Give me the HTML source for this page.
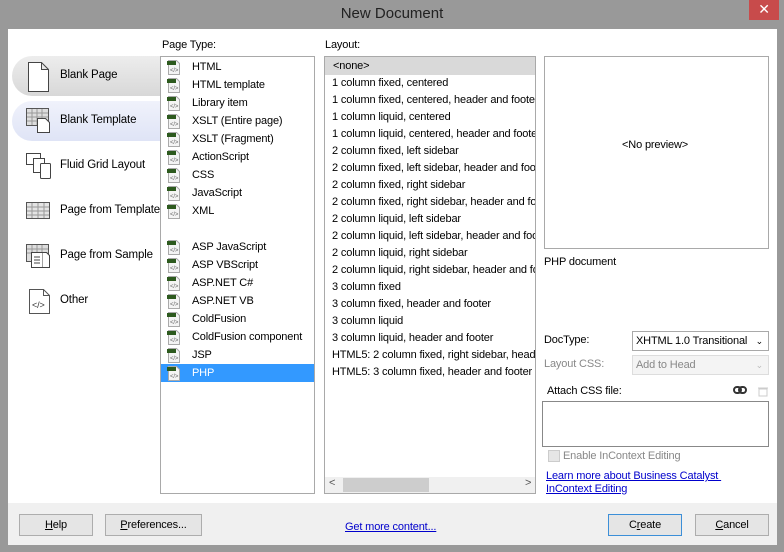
<!DOCTYPE html>
<html><head><meta charset="utf-8"><style>
*{margin:0;padding:0;box-sizing:border-box}
body{width:784px;height:552px;background:#999;font-family:"Liberation Sans",sans-serif;font-size:11px;letter-spacing:-0.15px;color:#000;position:relative;overflow:hidden}
.a{position:absolute;white-space:nowrap}
.title{left:0;top:5px;width:784px;text-align:center;font-size:15px;color:#222;letter-spacing:0}
.close{left:749px;top:0;width:30px;height:20px;background:#c84b4b;color:#fff;text-align:center;font-size:14px;line-height:19px}
.main{left:8px;top:29px;width:769px;height:475px;background:#fff}
.bot{left:8px;top:503px;width:769px;height:42px;background:#f0f0f0}
.box{border:1px solid #a9a9a9;background:#fff}
.pill{height:40px;border-radius:20px 0 0 20px}
.nav{left:60px;font-size:11.5px}
.row{position:absolute;left:0;height:18px;line-height:18px}
.ico{position:absolute;left:5px;top:1px;width:15px;height:16px}
.btn{border:1px solid #adadad;background:#e5e5e5;text-align:center;line-height:20px;height:22px}
.lnk{color:#0000cc;text-decoration:underline}
.sel{border:1px solid #a9a9a9;height:20px;line-height:18px;padding-left:3px}
</style></head><body>
<div class="a title">New Document</div>
<div class="a close">✕</div>
<div class="a main"></div>
<div class="a bot"></div>

<div class="a pill" style="left:12px;top:56px;width:150px;background:linear-gradient(#ededed,#d8d8d8)"></div>
<div class="a pill" style="left:12px;top:101px;width:150px;background:linear-gradient(#f0f2fb,#dfe4f6)"></div>

<svg class="a" style="left:24px;top:60px" width="30" height="34"><path d="M4.5 2.5h13l7 7v22h-20z M17.5 2.5v7h7" fill="#fff" stroke="#444"/></svg>
<svg class="a" style="left:25px;top:107px" width="28" height="27"><rect x="1.5" y="1.5" width="22" height="17" fill="#ddd" stroke="#555"/><path d="M2 6h21M2 10h21M2 14h21M7 2v16M12 2v16M17 2v16" stroke="#999"/><path d="M12.5 11.5h8l4 4v10h-12z" fill="#fff" stroke="#444"/></svg>
<svg class="a" style="left:25px;top:152px" width="28" height="28"><rect x="1.5" y="1.5" width="14" height="11" fill="#fff" stroke="#444"/><rect x="8.5" y="6.5" width="11" height="14" fill="#fff" stroke="#444"/><rect x="15.5" y="11.5" width="10" height="15" rx="1" fill="#fff" stroke="#444"/></svg>
<svg class="a" style="left:25px;top:200px" width="28" height="22"><rect x="1.5" y="2.5" width="23" height="16" fill="#e4e4e4" stroke="#555"/><path d="M2 7h22M2 11h22M2 15h22M7 3v15M13 3v15M19 3v15" stroke="#999"/></svg>
<svg class="a" style="left:25px;top:243px" width="28" height="28"><rect x="1.5" y="1.5" width="22" height="17" fill="#ddd" stroke="#555"/><path d="M2 6h21M2 10h21M7 2v16M12 2v16M17 2v16" stroke="#999"/><rect x="6.5" y="9.5" width="11" height="15" fill="#fff" stroke="#444"/><path d="M9 14h6M9 17h6M9 20h6" stroke="#444"/><path d="M17.5 9.5h4l3 3v12h-7" fill="#fff" stroke="#444"/></svg>
<svg class="a" style="left:28px;top:288px" width="24" height="28"><path d="M1.5 1.5h14l6 6v18h-20z M15.5 1.5v6h6" fill="#fff" stroke="#555"/><text x="4" y="20" font-size="9" font-family="Liberation Sans" fill="#333">&lt;/&gt;</text></svg>

<div class="a nav" style="top:69px">Blank Page</div>
<div class="a nav" style="top:114px">Blank Template</div>
<div class="a nav" style="top:159px">Fluid Grid Layout</div>
<div class="a nav" style="top:204px">Page from Template</div>
<div class="a nav" style="top:249px">Page from Sample</div>
<div class="a nav" style="top:294px">Other</div>

<div class="a" style="left:162px;top:39px">Page Type:</div>
<div class="a" style="left:325px;top:39px">Layout:</div>

<div class="a box" style="left:160px;top:56px;width:155px;height:438px">
<div id="pt"></div>
</div>
<div class="a box" style="left:324px;top:56px;width:212px;height:438px;overflow:hidden">
<div style="position:absolute;left:0;top:0;width:210px;height:18px;background:#d9d9d9"></div>
<div id="ly"></div>
<div style="position:absolute;left:0;top:420px;width:210px;height:16px;background:#f0f0f0"></div>
<div style="position:absolute;left:18px;top:421px;width:86px;height:14px;background:#cdcdcd"></div>
<div style="position:absolute;left:4px;top:420px;font-size:11px;color:#555">&lt;</div>
<div style="position:absolute;left:200px;top:420px;font-size:11px;color:#555">&gt;</div>
</div>

<div class="a box" style="left:544px;top:56px;width:225px;height:193px"></div>
<div class="a" style="left:622px;top:139px">&lt;No preview&gt;</div>
<div class="a" style="left:544px;top:256px">PHP document</div>

<div class="a" style="left:544px;top:334px">DocType:</div>
<div class="a sel" style="left:632px;top:331px;width:137px">XHTML 1.0 Transitional<span style="position:absolute;right:5px;font-size:9px">&#8964;</span></div>
<div class="a" style="left:544px;top:358px;color:#888">Layout CSS:</div>
<div class="a sel" style="left:632px;top:355px;width:137px;color:#888;border-color:#ddd;background:#f4f4f4">Add to Head<span style="position:absolute;right:5px;font-size:9px;color:#bbb">&#8964;</span></div>
<div class="a" style="left:547px;top:385px">Attach CSS file:</div>
<svg class="a" style="left:733px;top:385px" width="36" height="12"><rect x="1" y="2" width="7" height="6" rx="3" fill="none" stroke="#333" stroke-width="2"/><rect x="6" y="2" width="7" height="6" rx="3" fill="none" stroke="#333" stroke-width="2"/><path d="M25 3h10M26 4h8v7h-8z" fill="none" stroke="#ccc"/></svg>
<div class="a box" style="left:542px;top:401px;width:227px;height:46px;border-color:#888"></div>
<div class="a" style="left:548px;top:450px;width:12px;height:12px;border:1px solid #ccc;background:#e6e6e6"></div>
<div class="a" style="left:563px;top:450px;color:#888">Enable InContext Editing</div>
<div class="a lnk" style="left:546px;top:470px">Learn more about Business Catalyst&nbsp;</div>
<div class="a lnk" style="left:546px;top:483px">InContext Editing</div>

<div class="a btn" style="left:19px;top:514px;width:74px"><u>H</u>elp</div>
<div class="a btn" style="left:105px;top:514px;width:97px"><u>P</u>references...</div>
<div class="a lnk" style="left:345px;top:521px">Get more content...</div>
<div class="a btn" style="left:608px;top:514px;width:74px;border-color:#3c8fd8">C<u>r</u>eate</div>
<div class="a btn" style="left:695px;top:514px;width:74px"><u>C</u>ancel</div>

<script>
var pt=["HTML","HTML template","Library item","XSLT (Entire page)","XSLT (Fragment)","ActionScript","CSS","JavaScript","XML","","ASP JavaScript","ASP VBScript","ASP.NET C#","ASP.NET VB","ColdFusion","ColdFusion component","JSP","PHP"];
var ico='<svg class="ico" width="15" height="16"><path d="M2.5 1.5h8l3 3v11h-11z" fill="#f4f4f4" stroke="#aaa"/><rect x="1" y="2" width="9" height="4" fill="#2d5a1e"/><text x="4" y="13" font-size="6" fill="#666" font-family="Liberation Sans">&lt;/&gt;</text></svg>';
var h="";pt.forEach(function(t,i){if(!t)return;var s=t=="PHP";h+='<div class="row" style="top:'+(1+i*18)+'px;width:153px;'+(s?'background:#3399ff;color:#fff':'')+'">'+ico+'<span style="position:absolute;left:31px">'+t+'</span></div>';});
document.getElementById("pt").innerHTML=h;
var ly=["&lt;none&gt;","1 column fixed, centered","1 column fixed, centered, header and footer","1 column liquid, centered","1 column liquid, centered, header and footer","2 column fixed, left sidebar","2 column fixed, left sidebar, header and footer","2 column fixed, right sidebar","2 column fixed, right sidebar, header and footer","2 column liquid, left sidebar","2 column liquid, left sidebar, header and footer","2 column liquid, right sidebar","2 column liquid, right sidebar, header and footer","3 column fixed","3 column fixed, header and footer","3 column liquid","3 column liquid, header and footer","HTML5: 2 column fixed, right sidebar, header and footer","HTML5: 3 column fixed, header and footer"];
h="";ly.forEach(function(t,i){h+='<div class="row" style="top:'+(i*17)+'px;left:'+(i==0?8:7)+'px">'+t+'</div>';});
document.getElementById("ly").innerHTML=h;
</script>
</body></html>
